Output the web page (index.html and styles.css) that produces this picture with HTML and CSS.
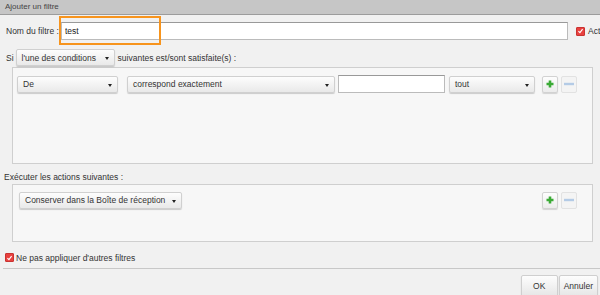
FILE: index.html
```html
<!DOCTYPE html>
<html lang="fr">
    <head>
        <meta charset="UTF-8" />
        <meta name="viewport" content="width=device-width, initial-scale=1.0" />
        <title>Ajouter un filtre</title>
        <link rel="stylesheet" href="styles.css">
    </head>

    <body>
        <div class="titlebar">Ajouter un filtre</div>

        <div class="dialog">
            <div class="name-row">
                <label for="filterName">Nom du filtre :</label>
                <input class="field field--name" type="text" id="filterName" value="test" />
                <span class="check"><svg viewBox="0 0 10 10" width="8" height="8"><path d="M2 5.2 L4.2 7.4 L8 2.4" fill="none" stroke="#fff" stroke-width="1.6"/></svg></span>
                <span class="check__label">Actif</span>
            </div>

            <!-- tutorial highlight over the name field -->
            <div class="highlight"></div>

            <div class="cond-row">
                <span>Si</span>
                <div class="select select--mode">l'une des conditions<i class="caret"></i></div>
                <span>suivantes est/sont satisfaite(s) :</span>
            </div>

            <div class="box box--conditions">
                <div class="rule">
                    <div class="select select--header">De<i class="caret"></i></div>
                    <div class="select select--op">correspond exactement<i class="caret"></i></div>
                    <input class="field field--value" type="text" />
                    <div class="select select--tout">tout<i class="caret"></i></div>
                    <div class="spacer"></div>
                    <button class="icon-btn"><svg viewBox="0 0 8 8" width="8" height="8"><path d="M4 0.5 V7.5 M0.5 4 H7.5" stroke="#3aaa35" stroke-width="2.6"/></svg></button>
                    <button class="icon-btn icon-btn--off"><svg viewBox="0 0 10 4" width="10" height="4"><path d="M0 2 H10" stroke="#b4cbe6" stroke-width="2.4"/></svg></button>
                </div>
            </div>

            <div class="section-title">Exécuter les actions suivantes :</div>

            <div class="box box--actions">
                <div class="rule">
                    <div class="select select--action">Conserver dans la Boîte de réception<i class="caret"></i></div>
                    <div class="spacer"></div>
                    <button class="icon-btn"><svg viewBox="0 0 8 8" width="8" height="8"><path d="M4 0.5 V7.5 M0.5 4 H7.5" stroke="#3aaa35" stroke-width="2.6"/></svg></button>
                    <button class="icon-btn icon-btn--off"><svg viewBox="0 0 10 4" width="10" height="4"><path d="M0 2 H10" stroke="#b4cbe6" stroke-width="2.4"/></svg></button>
                </div>
            </div>

            <div class="stop-row">
                <span class="check"><svg viewBox="0 0 10 10" width="8" height="8"><path d="M2 5.2 L4.2 7.4 L8 2.4" fill="none" stroke="#fff" stroke-width="1.6"/></svg></span>
                <span>Ne pas appliquer d'autres filtres</span>
            </div>
        </div>

        <div class="footer">
            <button class="btn btn--ok">OK</button>
            <button class="btn">Annuler</button>
        </div>
    </body>
</html>
```

FILE: styles.css
```css
/* CSS Reset */
html {
    box-sizing: border-box;
}

*,
*:before,
*:after {
    box-sizing: inherit;
}

body {
    margin: 0;
    width: 600px;
    height: 295px;
    overflow: hidden;
    position: relative;
    background: #f1f1f1;
    color: #333;
    font-family: "Liberation Sans", Arial, sans-serif;
    font-size: 8.5px;
}

.titlebar {
    height: 15px;
    line-height: 14px;
    padding-left: 5px;
    background: #c6c6c6;
    border-bottom: 1px solid #9c9c9c;
    color: #444;
    font-size: 8px;
}

.dialog {
    padding-top: 7px;
}

/* name row */
.name-row {
    display: flex;
    align-items: center;
    padding-left: 6px;
    height: 18px;
    white-space: nowrap;
}

.name-row label {
    flex-shrink: 0;
    width: 55px;
}

.field {
    flex-shrink: 0;
    height: 18px;
    margin: 0;
    padding: 0 3px;
    border: 1px solid #bbb;
    border-top-color: #999;
    background: #fff;
    font-family: inherit;
    font-size: 8.5px;
    color: #222;
}

.field--name {
    width: 507px;
}

.field--value {
    width: 107px;
    margin-left: 3px;
}

.highlight {
    position: absolute;
    left: 59px;
    top: 16px;
    width: 102px;
    height: 29px;
    border: 2px solid #f7941d;
}

.check {
    flex-shrink: 0;
    display: inline-flex;
    align-items: center;
    justify-content: center;
    width: 9px;
    height: 9px;
    background: #e8413f;
    border: 1px solid #c93331;
    border-radius: 1px;
}

.name-row .check {
    margin-left: 8px;
}

.check__label {
    margin-left: 3px;
}

/* condition mode row */
.cond-row {
    display: flex;
    align-items: center;
    height: 17px;
    margin-top: 9px;
    padding-left: 6px;
    white-space: nowrap;
}

.select {
    flex-shrink: 0;
    position: relative;
    display: flex;
    align-items: center;
    height: 17px;
    padding: 0 14px 0 5px;
    background: linear-gradient(#fdfdfd, #e9e9e9);
    border: 1px solid #d0d0d0;
    border-radius: 2px;
    box-shadow: 0 1px 1px rgba(0, 0, 0, 0.18);
    color: #333;
    white-space: nowrap;
}

.caret {
    position: absolute;
    right: 5px;
    top: 7px;
    border-left: 2.5px solid transparent;
    border-right: 2.5px solid transparent;
    border-top: 3px solid #222;
}

.select--mode {
    width: 99px;
    margin: 0 3px 0 2px;
}

.select--header {
    width: 101px;
}

.select--op {
    width: 208px;
    margin-left: 9px;
}

.select--tout {
    width: 86px;
    margin-left: 4px;
}

.select--action {
    width: 163px;
}

/* boxes */
.box {
    width: 581px;
    margin-left: 12px;
    background: #f7f7f7;
    border: 1px solid #cfcfcf;
}

.box--conditions {
    height: 97px;
    margin-top: 1px;
    padding: 7px 15px 0 4px;
}

.box--actions {
    height: 58px;
    padding: 6px 15px 0 6px;
}

.rule {
    display: flex;
    align-items: center;
    height: 18px;
}

.spacer {
    flex: 1;
}

.icon-btn {
    display: flex;
    align-items: center;
    justify-content: center;
    width: 16px;
    height: 17px;
    margin-left: 3px;
    padding: 0;
    background: linear-gradient(#fdfdfd, #ececec);
    border: 1px solid #d2d2d2;
    border-radius: 2px;
    box-shadow: 0 1px 1px rgba(0, 0, 0, 0.15);
}

.icon-btn--off {
    background: #f4f4f4;
    border-color: #e2e2e2;
    box-shadow: none;
}

.section-title {
    height: 20px;
    line-height: 26px;
    padding-left: 4px;
}

.stop-row {
    display: flex;
    align-items: center;
    gap: 2px;
    margin-top: 11px;
    padding-left: 5px;
    height: 9px;
}

/* footer */
.footer {
    display: flex;
    justify-content: flex-end;
    gap: 1px;
    margin: 6px 0 0 3px;
    padding: 6px 2px 0 0;
    border-top: 1px solid #c8c8c8;
}

.btn {
    height: 22px;
    padding: 0 4px;
    background: linear-gradient(#fdfdfd, #e6e6e6);
    border: 1px solid #cfcfcf;
    border-radius: 2px;
    box-shadow: 0 1px 1px rgba(0, 0, 0, 0.2);
    color: #333;
    font-family: inherit;
    font-size: 8.5px;
}

.btn--ok {
    width: 37px;
}
```
